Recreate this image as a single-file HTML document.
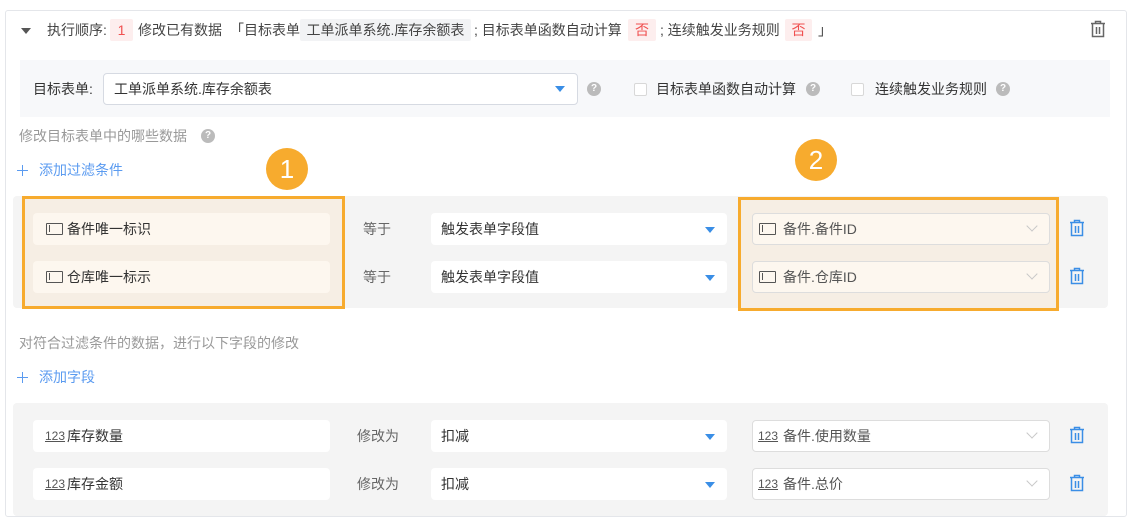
<!DOCTYPE html>
<html><head><meta charset="utf-8">
<style>
*{box-sizing:border-box;margin:0;padding:0}
body{width:1132px;height:518px;background:#fff;position:relative;overflow:hidden;font-family:"Liberation Sans","Noto Sans CJK SC",sans-serif;font-size:14px;color:#333}
.a{position:absolute}
.t{position:absolute;white-space:nowrap;line-height:20px}
.tag{position:absolute;height:22px;line-height:22px;text-align:center;border-radius:2px}
.q{position:absolute;width:14px;height:14px;border-radius:50%;background:#bbb;color:#fff;font-size:10px;font-weight:bold;text-align:center;line-height:14px}
.cb{position:absolute;width:13px;height:13px;border:1px solid #d8d8d8;background:#fff;border-radius:2px}
.fld{position:absolute;height:32px;border-radius:4px;background:#fff;line-height:32px;padding-left:34px;color:#333}
.sel{position:absolute;height:32px;border-radius:4px;background:#fff;line-height:32px;padding-left:10px}
.arr{position:absolute;width:0;height:0;border-left:5px solid transparent;border-right:5px solid transparent;border-top:6px solid #3a8ee6}
.ic{position:absolute;left:13px;top:10px;width:17px;height:12px;border:1.5px solid #555;border-radius:1px}
.ic:after{content:"";position:absolute;left:2px;top:1px;width:1px;height:7px;background:#555}
.n{position:absolute;left:12px;top:0;font-size:12px;text-decoration:underline;color:#555}
.chev{position:absolute;width:8px;height:8px;border-right:1px solid #c8c8c8;border-bottom:1px solid #c8c8c8;transform:rotate(45deg)}
.badge{position:absolute;border-radius:50%;background:#f7ab2e;color:#fff;font-size:26px;text-align:center}
.plus{position:absolute;width:11px;height:11px}
.plus:before{content:"";position:absolute;left:0;top:5px;width:11px;height:1px;background:#5b9bf0}
.plus:after{content:"";position:absolute;left:5px;top:0;width:1px;height:11px;background:#5b9bf0}
</style></head><body>
<div class="a" style="left:5px;top:10px;width:1122px;height:507px;border:1px solid #e4e6ea;border-radius:3px"></div>
<!-- header -->
<div class="a" style="left:21px;top:28px;width:0;height:0;border-left:5px solid transparent;border-right:5px solid transparent;border-top:6px solid #555"></div>
<div class="t" style="left:47px;top:20px;color:#444">执行顺序:</div>
<div class="tag" style="left:110px;top:19px;width:23px;background:#fdeeee;color:#f05050">1</div>
<div class="t" style="left:138px;top:20px;color:#444">修改已有数据</div>
<div class="t" style="left:230px;top:20px;color:#444">「目标表单</div>
<div class="tag" style="left:300px;top:19px;width:171px;background:#f2f3f5;color:#444">工单派单系统.库存余额表</div>
<div class="t" style="left:474px;top:20px;color:#444">; 目标表单函数自动计算</div>
<div class="tag" style="left:628px;top:19px;width:28px;background:#fdeeee;color:#f05050">否</div>
<div class="t" style="left:660px;top:20px;color:#444">; 连续触发业务规则</div>
<div class="tag" style="left:785px;top:19px;width:27px;background:#fdeeee;color:#f05050">否</div>
<div class="t" style="left:818px;top:20px;color:#444">」</div>
<svg class="a" style="left:1090px;top:20px" width="16" height="18" viewBox="0 0 16 18"><path d="M1 3.5h14M5.5 3.5V1.5h5v2M2.5 3.5v13h11v-13M6.5 7v7M9.5 7v7" fill="none" stroke="#666" stroke-width="1.5"/></svg>
<!-- target form panel -->
<div class="a" style="left:20px;top:60px;width:1090px;height:57px;background:#f7f8fa"></div>
<div class="t" style="left:33px;top:79px">目标表单:</div>
<div class="sel" style="left:103px;top:73px;width:475px;border:1px solid #d6dae2;line-height:30px">工单派单系统.库存余额表</div>
<div class="arr" style="left:555px;top:86px"></div>
<div class="q" style="left:587px;top:82px">?</div>
<div class="cb" style="left:634px;top:83px"></div>
<div class="t" style="left:656px;top:79px">目标表单函数自动计算</div>
<div class="q" style="left:806px;top:82px">?</div>
<div class="cb" style="left:851px;top:83px"></div>
<div class="t" style="left:875px;top:79px">连续触发业务规则</div>
<div class="q" style="left:996px;top:82px">?</div>
<div class="t" style="left:19px;top:126px;color:#999">修改目标表单中的哪些数据</div>
<div class="q" style="left:201px;top:129px">?</div>
<div class="plus" style="left:17px;top:165px"></div>
<div class="t" style="left:39px;top:160px;color:#5b9bf0">添加过滤条件</div>
<!-- filter panel -->
<div class="a" style="left:13px;top:196px;width:1095px;height:112px;background:#f4f4f4;border-radius:4px"></div>
<div class="a" style="left:22px;top:196px;width:323px;height:113px;border:3px solid #f7ab2e;background:#f6eee4"></div>
<div class="fld" style="left:33px;top:213px;width:297px;background:#fdf7ef"><span class="ic"></span>备件唯一标识</div>
<div class="fld" style="left:33px;top:261px;width:297px;background:#fdf7ef"><span class="ic"></span>仓库唯一标示</div>
<div class="t" style="left:363px;top:219px;color:#666">等于</div>
<div class="t" style="left:363px;top:267px;color:#666">等于</div>
<div class="sel" style="left:431px;top:213px;width:296px">触发表单字段值</div>
<div class="sel" style="left:431px;top:261px;width:296px">触发表单字段值</div>
<div class="arr" style="left:705px;top:227px"></div>
<div class="arr" style="left:705px;top:275px"></div>
<div class="a" style="left:738px;top:197px;width:321px;height:114px;border:3px solid #f7ab2e;background:#f6eee4"></div>
<div class="fld" style="left:752px;top:213px;width:298px;background:#fdf7ef;border:1px solid #ddd;line-height:30px;padding-left:30px;color:#555"><span class="ic" style="left:6px;top:9px"></span>备件.备件ID</div>
<div class="fld" style="left:752px;top:261px;width:298px;background:#fdf7ef;border:1px solid #ddd;line-height:30px;padding-left:30px;color:#555"><span class="ic" style="left:6px;top:9px"></span>备件.仓库ID</div>
<div class="chev" style="left:1028px;top:222px"></div>
<div class="chev" style="left:1028px;top:270px"></div>
<svg class="a" style="left:1069px;top:219px" width="16" height="18" viewBox="0 0 16 18"><path d="M1 3.5h14M5.5 3.5V1.5h5v2M2.5 3.5v13h11v-13M6.5 7v7M9.5 7v7" fill="none" stroke="#3a8ee6" stroke-width="1.5"/></svg>
<svg class="a" style="left:1069px;top:267px" width="16" height="18" viewBox="0 0 16 18"><path d="M1 3.5h14M5.5 3.5V1.5h5v2M2.5 3.5v13h11v-13M6.5 7v7M9.5 7v7" fill="none" stroke="#3a8ee6" stroke-width="1.5"/></svg>
<div class="badge" style="left:266px;top:148px;width:42px;height:42px;line-height:42px">1</div>
<div class="badge" style="left:795px;top:139px;width:42px;height:42px;line-height:42px">2</div>
<!-- modify section -->
<div class="t" style="left:19px;top:333px;color:#999">对符合过滤条件的数据，进行以下字段的修改</div>
<div class="plus" style="left:17px;top:372px"></div>
<div class="t" style="left:39px;top:367px;color:#5b9bf0">添加字段</div>
<div class="a" style="left:13px;top:403px;width:1095px;height:113px;background:#f4f4f4;border-radius:4px"></div>
<div class="fld" style="left:33px;top:420px;width:297px"><span class="n" style="line-height:32px">123</span>库存数量</div>
<div class="fld" style="left:33px;top:468px;width:297px"><span class="n" style="line-height:32px">123</span>库存金额</div>
<div class="t" style="left:357px;top:426px;color:#666">修改为</div>
<div class="t" style="left:357px;top:474px;color:#666">修改为</div>
<div class="sel" style="left:431px;top:420px;width:296px">扣减</div>
<div class="sel" style="left:431px;top:468px;width:296px">扣减</div>
<div class="arr" style="left:705px;top:434px"></div>
<div class="arr" style="left:705px;top:482px"></div>
<div class="fld" style="left:752px;top:420px;width:298px;border:1px solid #ddd;line-height:30px;padding-left:30px;color:#555"><span class="n" style="left:5px;line-height:30px">123</span>备件.使用数量</div>
<div class="fld" style="left:752px;top:468px;width:298px;border:1px solid #ddd;line-height:30px;padding-left:30px;color:#555"><span class="n" style="left:5px;line-height:30px">123</span>备件.总价</div>
<div class="chev" style="left:1028px;top:429px"></div>
<div class="chev" style="left:1028px;top:477px"></div>
<svg class="a" style="left:1069px;top:426px" width="16" height="18" viewBox="0 0 16 18"><path d="M1 3.5h14M5.5 3.5V1.5h5v2M2.5 3.5v13h11v-13M6.5 7v7M9.5 7v7" fill="none" stroke="#3a8ee6" stroke-width="1.5"/></svg>
<svg class="a" style="left:1069px;top:474px" width="16" height="18" viewBox="0 0 16 18"><path d="M1 3.5h14M5.5 3.5V1.5h5v2M2.5 3.5v13h11v-13M6.5 7v7M9.5 7v7" fill="none" stroke="#3a8ee6" stroke-width="1.5"/></svg>
</body></html>
